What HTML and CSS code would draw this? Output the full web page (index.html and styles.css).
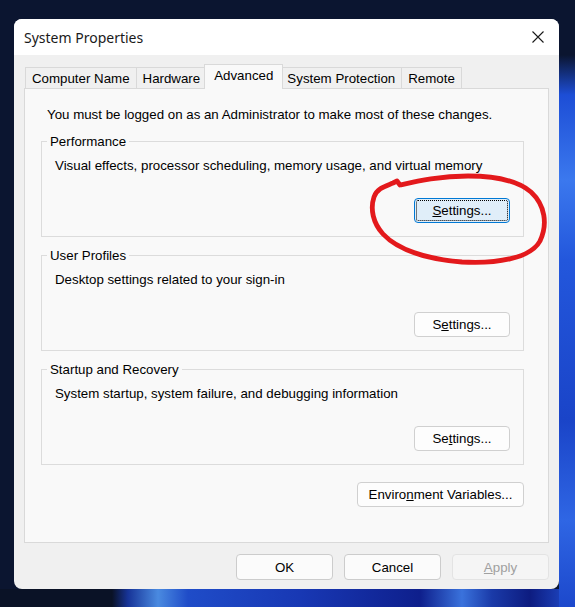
FILE: index.html
```html
<!DOCTYPE html>
<html lang="en">
<head>
  <meta charset="UTF-8">
  <title>System Properties</title>
  <link rel="stylesheet" href="styles.css">
</head>
<body>

  <div class="dialog">
    <div class="titlebar">
      <span class="title">System Properties</span>
      <svg class="close" width="12" height="12" viewBox="0 0 12 12">
        <path d="M0.5 0.5 L11.5 11.5 M11.5 0.5 L0.5 11.5" stroke="#1a1a1a" stroke-width="1.1" fill="none"/>
      </svg>
    </div>

    <div class="content">
      <div class="tabs">
        <div class="tab">Computer Name</div>
        <div class="tab">Hardware</div>
        <div class="tab active">Advanced</div>
        <div class="tab">System Protection</div>
        <div class="tab">Remote</div>
      </div>

      <div class="panel">
        <p class="note">You must be logged on as an Administrator to make most of these changes.</p>

        <fieldset class="group">
          <legend>Performance</legend>
          <p class="desc">Visual effects, processor scheduling, memory usage, and virtual memory</p>
          <div class="group-actions">
            <button class="btn focused"><u>S</u>ettings...</button>
          </div>
        </fieldset>

        <fieldset class="group">
          <legend>User Profiles</legend>
          <p class="desc">Desktop settings related to your sign-in</p>
          <div class="group-actions">
            <button class="btn">S<u>e</u>ttings...</button>
          </div>
        </fieldset>

        <fieldset class="group">
          <legend>Startup and Recovery</legend>
          <p class="desc">System startup, system failure, and debugging information</p>
          <div class="group-actions">
            <button class="btn">Se<u>t</u>tings...</button>
          </div>
        </fieldset>

        <div class="env-row">
          <button class="btn env">Enviro<u>n</u>ment Variables...</button>
        </div>
      </div>

      <div class="footer">
        <button class="btn dlg">OK</button>
        <button class="btn dlg">Cancel</button>
        <button class="btn dlg disabled"><u>A</u>pply</button>
      </div>
    </div>
  </div>

  <!-- red marker drawn over the screenshot -->
  <svg class="marker" width="575" height="607" viewBox="0 0 575 607">
    <path d="M393 183 C386 186, 377 188, 374 197 C370 209, 373 223, 383 234 C397 249, 425 259, 462 262 C497 264, 531 258, 540 241 C548 224, 545 205, 531 192 C517 180, 495 176, 468 176 C440 176, 418 181, 400 185 L397 181 Z"
          fill="none" stroke="#e3191c" stroke-width="4.8" stroke-linejoin="round" stroke-linecap="round"/>
  </svg>

</body>
</html>
```

FILE: styles.css
```css
body {
  margin: 0;
  width: 575px;
  height: 607px;
  overflow: hidden;
  font-family: "Liberation Sans", Arial, sans-serif;
  font-size: 13.3px;
  color: #000;
  background:
    linear-gradient(to bottom, #0b1530 0, #0b1530 55px, #1d4ed6 95px, #3b78ee 180px, #2357dc 260px, #1a44c8 420px, #2f66e4 520px, #1c48cc 607px) right top / 16px 607px no-repeat,
    linear-gradient(to right, #0a1226 0, #0a1226 112px, #173498 128px, #4a8ae0 158px, #1f4cc8 188px, #1838b4 300px, #0e1f8c 420px, #3a72dc 462px, #1a3aa8 492px, #0d1c80 530px, #2250d2 575px) left bottom / 575px 18px no-repeat,
    #0b1530;
}

.dialog {
  margin: 19px 0 0 14px;
  width: 545px;
  height: 570px;
  background: #f0f0f0;
  border-radius: 8px;
  overflow: hidden;
}

.titlebar {
  height: 36px;
  background: #fff;
  display: flex;
  align-items: center;
  justify-content: space-between;
  padding: 0 15px 0 10px;
}

.title {
  font-family: "Noto Sans", sans-serif;
  font-size: 14px;
  color: #1a1a1a;
}

.content {
  padding: 9px 10px 0 10px;
}

.tabs {
  display: flex;
  align-items: flex-end;
  height: 24px;
  padding-left: 1px;
}

.tab {
  box-sizing: border-box;
  height: 21px;
  line-height: 21px;
  padding: 0 6px;
  border: 1px solid #d9d9d9;
  border-bottom: none;
  background: #f0f0f0;
  margin-right: -1px;
}

.tab.active {
  height: 25px;
  line-height: 22px;
  padding: 0 9px;
  margin: 0 -3px -1px -2px;
  background: #f9f9f9;
  z-index: 1;
}

.panel {
  box-sizing: border-box;
  height: 455px;
  border: 1px solid #d9d9d9;
  background: #f9f9f9;
  padding: 18px 24px 0 16px;
}

.note {
  margin: 0 0 0 6px;
  line-height: 16px;
}

.group {
  margin: 10px 0 0;
  padding: 0 13px 13px 0;
  border: 1px solid #dcdcdc;
  min-width: 0;
}

.group legend {
  margin-left: 5px;
  padding: 1px 3px 0;
  line-height: 15px;
}

.desc {
  margin: 9px 0 0 13px;
  line-height: 16px;
}

.group-actions {
  display: flex;
  justify-content: flex-end;
  margin-top: 24px;
}

.btn {
  font-family: "Liberation Sans", Arial, sans-serif;
  font-size: 13.3px;
  color: #000;
  width: 96px;
  height: 25px;
  padding: 0;
  background: #fdfdfd;
  border: 1px solid #d0d0d0;
  border-radius: 4px;
}

.btn.focused {
  background: #e0eef9;
  border-color: #0078d4;
  outline: 1px dotted #000;
  outline-offset: -3px;
}

.env-row {
  display: flex;
  justify-content: flex-end;
  margin-top: 17px;
}

.btn.env {
  width: 167px;
}

.footer {
  display: flex;
  justify-content: flex-end;
  gap: 11px;
  margin-top: 11px;
}

.btn.dlg {
  width: 97px;
  height: 26px;
  background: #fbfbfb;
  border-color: #cccccc;
}

.btn.dlg.disabled {
  background: #f5f5f5;
  border-color: #e3e3e3;
  color: #a0a0a0;
}

.marker {
  position: absolute;
  top: 0;
  left: 0;
  pointer-events: none;
}
```
